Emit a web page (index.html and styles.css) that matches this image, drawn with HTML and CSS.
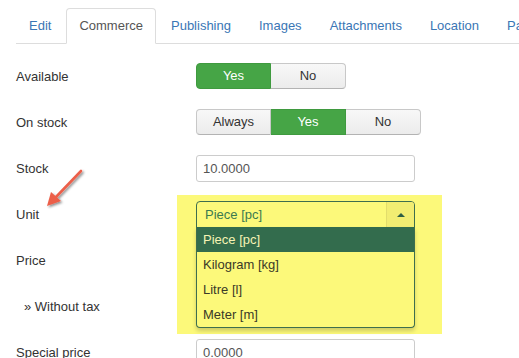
FILE: index.html
```html
<!DOCTYPE html>
<html lang="en">
<head>
    <meta charset="UTF-8">
    <title>Product - Commerce</title>
    <link rel="stylesheet" href="styles.css">
</head>
<body>
    <div class="page">
        <ul class="tabs">
            <li class="tab">Edit</li>
            <li class="tab active">Commerce</li>
            <li class="tab">Publishing</li>
            <li class="tab">Images</li>
            <li class="tab">Attachments</li>
            <li class="tab">Location</li>
            <li class="tab">Params</li>
        </ul>

        <form class="form">
            <div class="row">
                <label class="label">Available</label>
                <div class="toggle">
                    <span class="btn on">Yes</span>
                    <span class="btn">No</span>
                </div>
            </div>
            <div class="row">
                <label class="label">On stock</label>
                <div class="toggle">
                    <span class="btn">Always</span>
                    <span class="btn on">Yes</span>
                    <span class="btn">No</span>
                </div>
            </div>
            <div class="row">
                <label class="label">Stock</label>
                <input class="input" type="text" value="10.0000">
            </div>
            <div class="row">
                <label class="label">Unit</label>
                <div class="unit">
                    <div class="mark"></div>
                    <div class="select">
                        <span class="select-text">Piece [pc]</span>
                        <span class="select-arrow"><i class="caret"></i></span>
                    </div>
                    <ul class="menu">
                        <li class="item current">Piece [pc]</li>
                        <li class="item">Kilogram [kg]</li>
                        <li class="item">Litre [l]</li>
                        <li class="item">Meter [m]</li>
                    </ul>
                </div>
            </div>
            <div class="row">
                <label class="label">Price</label>
                <input class="input" type="text" value="">
            </div>
            <div class="row">
                <label class="label sub">&raquo; Without tax</label>
                <input class="input" type="text" value="">
            </div>
            <div class="row">
                <label class="label">Special price</label>
                <input class="input" type="text" value="0.0000">
            </div>
        </form>

        <!-- seta de destaque -->
        <svg class="pointer" width="519" height="358" viewBox="0 0 519 358">
            <defs>
                <filter id="sombra" x="-50%" y="-50%" width="200%" height="200%">
                    <feDropShadow dx="1.5" dy="1.5" stdDeviation="1.2" flood-color="#000" flood-opacity="0.45"/>
                </filter>
            </defs>
            <g filter="url(#sombra)">
                <line x1="81" y1="171" x2="56" y2="197" stroke="#ec5f4a" stroke-width="2.6" stroke-linecap="round"/>
                <polygon points="47,206 51,192 61,201" fill="#ec5f4a"/>
            </g>
        </svg>
    </div>
</body>
</html>
```

FILE: styles.css
```css
/* Reset */
* {
    margin: 0;
    padding: 0;
    box-sizing: border-box;
}

body {
    font-family: "Liberation Sans", Arial, sans-serif;
    font-size: 13px;
    color: #333;
    background: #fff;
    overflow: hidden;
}

.page {
    position: relative;
    width: 519px;
    height: 358px;
    overflow: hidden;
}

/* Abas */
.tabs {
    display: flex;
    list-style: none;
    margin: 8px 0 0 16px;
    border-bottom: 1px solid #ddd;
    white-space: nowrap;
}

.tab {
    padding: 8px 12px;
    line-height: 18px;
    margin-right: 2px;
    margin-bottom: -1px;
    border: 1px solid transparent;
    border-radius: 4px 4px 0 0;
    color: #3a76b5;
    flex-shrink: 0;
}

.tab.active {
    color: #555;
    background: #fff;
    border-color: #ddd #ddd transparent;
}

/* Formulario */
.form {
    padding: 9px 0 0 16px;
}

.row {
    display: flex;
    align-items: center;
    height: 46px;
}

.label {
    width: 180px;
    flex-shrink: 0;
}

.label.sub {
    padding-left: 8px;
}

/* Botoes de escolha */
.toggle {
    display: flex;
}

.btn {
    width: 75px;
    height: 26px;
    line-height: 24px;
    text-align: center;
    color: #333;
    background: linear-gradient(#f8f8f8, #ececec);
    border: 1px solid #c8c8c8;
    border-bottom-color: #b3b3b3;
    border-left-width: 0;
}

.btn:first-child {
    border-left-width: 1px;
    border-radius: 4px 0 0 4px;
}

.btn:last-child {
    border-radius: 0 4px 4px 0;
}

.btn.on {
    background: #46a546;
    border-color: #3f9a3f;
    color: #fff;
}

/* Campos de texto */
.input {
    width: 219px;
    height: 27px;
    padding: 4px 6px;
    border: 1px solid #ccc;
    border-radius: 3px;
    font-family: inherit;
    font-size: 13px;
    color: #555;
    background: #fff;
}

/* Seletor de unidade */
.unit {
    position: relative;
    width: 219px;
    height: 26px;
}

.mark {
    position: absolute;
    left: -19px;
    top: -6px;
    width: 265px;
    height: 139px;
    background: #fcf97a;
    z-index: 1;
}

.select {
    position: relative;
    z-index: 2;
    display: flex;
    height: 27px;
    border: 1px solid #3e6e4e;
    border-radius: 4px 4px 0 0;
    background: #fcf97a;
}

.select-text {
    flex: 1;
    padding-left: 8px;
    line-height: 25px;
    color: #3b7a50;
}

.select-arrow {
    width: 28px;
    display: flex;
    align-items: center;
    justify-content: center;
    background: #f2ed72;
    border-left: 1px solid #e2dd6c;
    border-radius: 0 3px 0 0;
}

.caret {
    width: 0;
    height: 0;
    border-left: 4px solid transparent;
    border-right: 4px solid transparent;
    border-bottom: 4px solid #2e5e44;
}

.menu {
    position: absolute;
    z-index: 2;
    top: 26px;
    left: 0;
    width: 219px;
    list-style: none;
    background: #fcf97a;
    border: 1px solid #3e6e4e;
    border-top: none;
    border-radius: 0 0 4px 4px;
    box-shadow: 0 3px 4px rgba(0, 0, 0, 0.18);
}

.item {
    height: 25px;
    line-height: 25px;
    padding-left: 6px;
    color: #3a3a28;
}

.item.current {
    background: #336c4d;
    color: #f6f3b4;
}

/* Seta de anotacao */
.pointer {
    position: absolute;
    left: 0;
    top: 0;
    pointer-events: none;
    z-index: 3;
}
```
